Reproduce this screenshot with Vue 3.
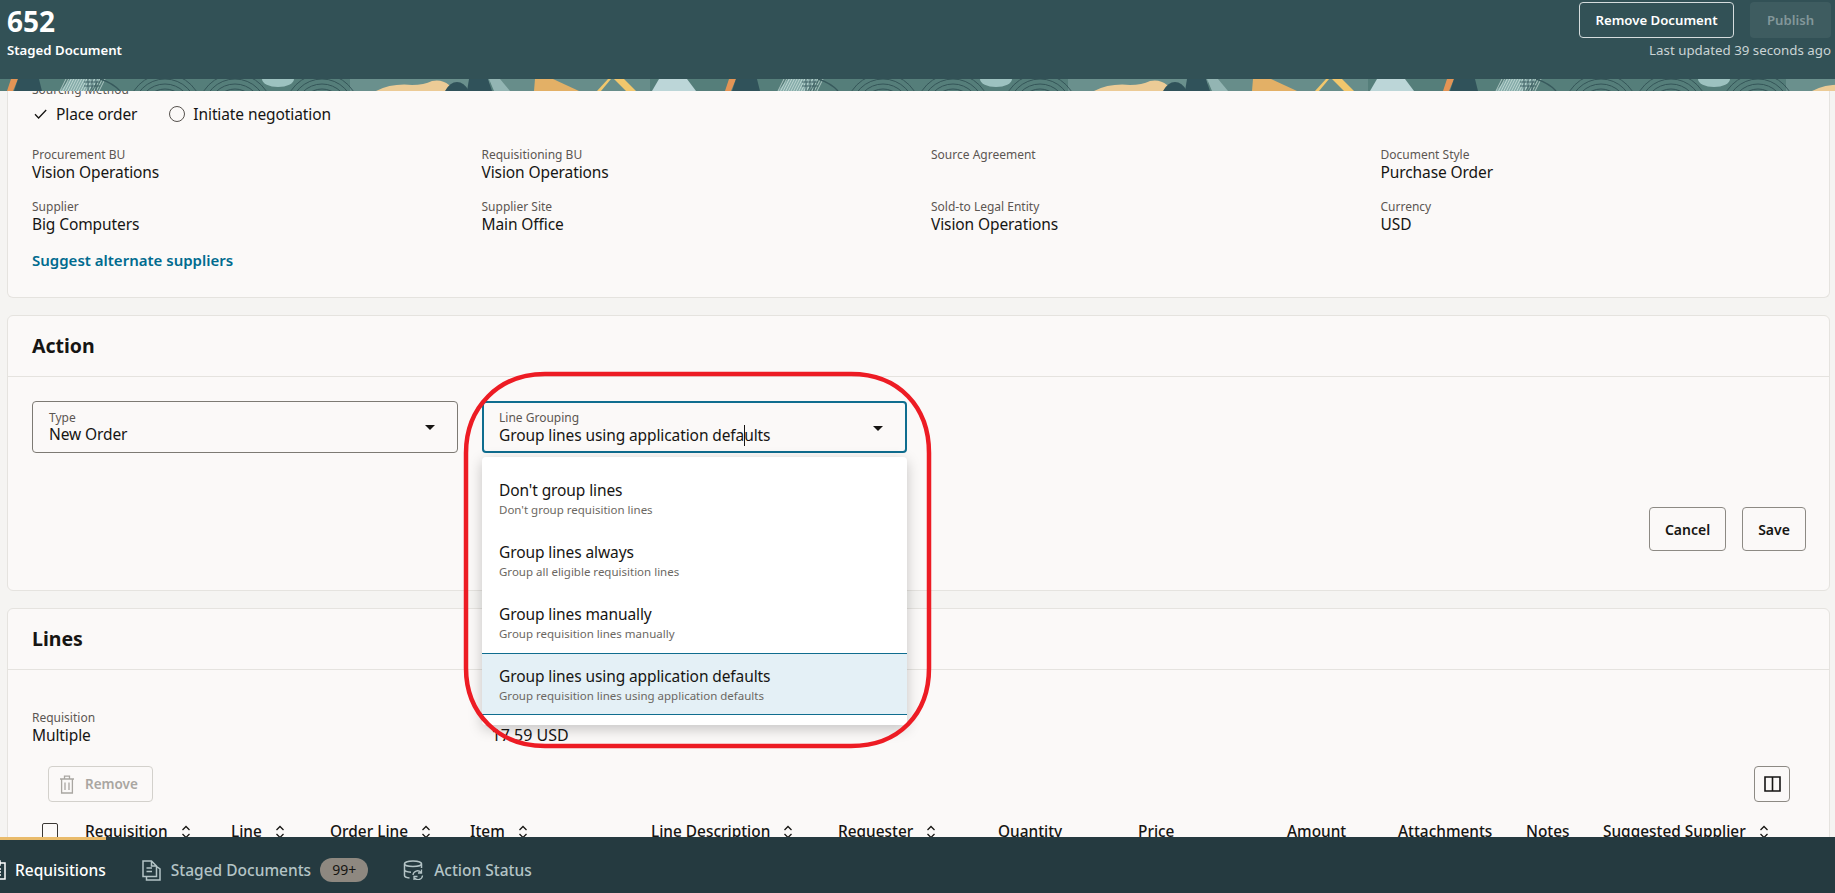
<script setup>
const summary = [
  { label: 'Procurement BU', value: 'Vision Operations' },
  { label: 'Requisitioning BU', value: 'Vision Operations' },
  { label: 'Source Agreement', value: '' },
  { label: 'Document Style', value: 'Purchase Order' },
  { label: 'Supplier', value: 'Big Computers' },
  { label: 'Supplier Site', value: 'Main Office' },
  { label: 'Sold-to Legal Entity', value: 'Vision Operations' },
  { label: 'Currency', value: 'USD' },
]
const options = [
  { title: "Don't group lines", sub: "Don't group requisition lines" },
  { title: 'Group lines always', sub: 'Group all eligible requisition lines' },
  { title: 'Group lines manually', sub: 'Group requisition lines manually' },
  { title: 'Group lines using application defaults', sub: 'Group requisition lines using application defaults', selected: true },
]
const columns = [
  { name: 'Requisition', width: 146, sort: true },
  { name: 'Line', width: 99, sort: true },
  { name: 'Order Line', width: 140, sort: true },
  { name: 'Item', width: 181, sort: true },
  { name: 'Line Description', width: 187, sort: true },
  { name: 'Requester', width: 160, sort: true },
  { name: 'Quantity', width: 140 },
  { name: 'Price', width: 149 },
  { name: 'Amount', width: 111 },
  { name: 'Attachments', width: 128 },
  { name: 'Notes', width: 77 },
  { name: 'Suggested Supplier', width: 200, sort: true },
]
const arcCentres = [165, 235, 322]
const arcRadii = [10, 15, 20, 25, 30, 35]
const hatch = Array.from({ length: 16 }, (_, i) => 62 + i * 2.6)
</script>

<template>
  <div class="page">
    <header class="head">
      <div class="head-left">
        <div class="doc-number">652</div>
        <div class="doc-type">Staged Document</div>
      </div>
      <div class="head-right">
        <div class="head-actions">
          <button class="btn-outline-light">Remove Document</button>
          <button class="btn-disabled-dark">Publish</button>
        </div>
        <div class="updated">Last updated 39 seconds ago</div>
      </div>
    </header>

    <svg class="strip" width="1835" height="12" aria-hidden="true">
      <defs>
        <pattern id="tile" x="0" y="0" width="718" height="12" patternUnits="userSpaceOnUse">
          <rect width="718" height="12" fill="#557e7a" />
          <rect x="350" width="140" height="12" fill="#6a908d" />
          <rect x="500" width="150" height="12" fill="#678d8a" />
          <polygon points="11,0 18,0 13,12 7,12" fill="#e39455" />
          <path d="M18 0H39L42 12H14Z" fill="#30525a" />
          <polygon points="70,0 100,0 88,12 60,12" fill="#84aba8" />
          <g stroke="#d6e6e3" stroke-width="0.9" opacity="0.75">
            <line v-for="h in hatch" :key="h" :x1="h + 4" y1="0" :x2="h - 2" y2="12" />
          </g>
          <g stroke="#37595c" stroke-width="0.9" fill="none">
            <line x1="88" y1="0" x2="88" y2="12" />
            <line x1="92" y1="0" x2="92" y2="12" />
            <line x1="96" y1="0" x2="96" y2="12" />
            <line x1="84" y1="3" x2="100" y2="3" />
            <line x1="84" y1="7" x2="100" y2="7" />
            <path d="M100 0Q113 4 120 12" stroke-width="1.4" />
          </g>
          <g v-for="c in arcCentres" :key="c" fill="none" stroke="#2f4f52" stroke-width="0.9">
            <circle v-for="r in arcRadii" :key="r" :cx="c" cy="32" :r="r + 2" />
          </g>
          <ellipse cx="278" cy="0" rx="16" ry="8" fill="#9dc2c0" />
          <path d="M376 12Q392 4 412 6Q424 6 432 2Q442 0 449 6L456 12Z" fill="#eccb96" />
          <path d="M445 12Q450 3 457 3Q464 3 469 12Z" fill="#30525a" />
          <path d="M469 0H488L492 12H467Z" fill="#30525a" />
          <polygon points="489,0 500,0 510,12 494,12" fill="#93b5b3" />
          <polygon points="535,0 553,0 579,12 534,12" fill="#e3b066" />
          <polygon points="608,0 611,0 601,12 597,12" fill="#f2c76c" />
          <polygon points="614,0 624,0 636,12 626,12" fill="#f2c76c" />
          <polygon points="659,0 687,0 696,12 652,12" fill="#bcd6d8" />
        </pattern>
      </defs>
      <rect width="1835" height="12" fill="url(#tile)" />
    </svg>

    <main class="content">
      <section class="card card-summary">
        <div class="field-label sourcing">Sourcing Method</div>
        <div class="method-row">
          <div class="method">
            <svg class="check" width="13" height="10" viewBox="0 0 13 10"><path d="M1 5.2L4.6 9L12.2 1" fill="none" stroke="#161513" stroke-width="1.3" /></svg>
            <span>Place order</span>
          </div>
          <div class="method">
            <span class="radio"></span>
            <span>Initiate negotiation</span>
          </div>
        </div>
        <div class="summary-grid">
          <div v-for="item in summary" :key="item.label" class="field">
            <div class="field-label">{{ item.label }}</div>
            <div class="field-value">{{ item.value }}</div>
          </div>
        </div>
        <a class="link">Suggest alternate suppliers</a>
      </section>

      <section class="card card-action">
        <h2 class="card-title">Action</h2>
        <div class="card-body">
          <div class="selects">
            <div class="select">
              <div class="select-label">Type</div>
              <div class="select-value">New Order</div>
              <span class="arrow"></span>
            </div>
            <div class="select select-focus">
              <div class="select-label">Line Grouping</div>
              <div class="select-value">Group lines using application defa<span class="caret"></span>ults</div>
              <span class="arrow"></span>
              <div class="dropdown">
                <div v-for="o in options" :key="o.title" class="option" :class="{ selected: o.selected }">
                  <div class="option-title">{{ o.title }}</div>
                  <div class="option-sub">{{ o.sub }}</div>
                </div>
              </div>
            </div>
          </div>
          <div class="action-buttons">
            <button class="btn">Cancel</button>
            <button class="btn">Save</button>
          </div>
        </div>
      </section>

      <section class="card card-lines">
        <h2 class="card-title">Lines</h2>
        <div class="lines-body">
          <div class="lines-summary">
            <div class="field">
              <div class="field-label">Requisition</div>
              <div class="field-value">Multiple</div>
            </div>
            <div class="field total">
              <div class="field-label">&nbsp;</div>
              <div class="field-value">17.59 USD</div>
            </div>
          </div>
          <div class="toolbar">
            <button class="btn-remove">
              <svg width="16" height="19" viewBox="0 0 16 19" fill="none" stroke="#a9a6a1" stroke-width="1.3">
                <path d="M1 4H15M5.5 4V1.2H10.5V4M2.6 4V18H13.4V4M6 7.5V15M10 7.5V15" />
              </svg>
              <span>Remove</span>
            </button>
            <button class="btn-columns">
              <svg width="17" height="16" viewBox="0 0 17 16" fill="none" stroke="#161513" stroke-width="1.6">
                <path d="M1 1H16V15H1ZM8.5 1V15" />
              </svg>
            </button>
          </div>
          <div class="table-head">
            <span class="checkbox"></span>
            <div v-for="c in columns" :key="c.name" class="th" :style="{ width: c.width + 'px' }">
              <span>{{ c.name }}</span>
              <svg v-if="c.sort" width="10" height="14" viewBox="0 0 10 14" fill="none" stroke="#161513" stroke-width="1.3">
                <path d="M1.5 5L5 1.5L8.5 5M1.5 9L5 12.5L8.5 9" />
              </svg>
            </div>
          </div>
        </div>
      </section>
    </main>

    <nav class="tabs">
      <div class="tab tab-active">
        <svg width="19" height="20" viewBox="0 0 19 20" fill="none" stroke="#fff" stroke-width="1.5">
          <path d="M1 3H18V19H1ZM6 1H13V5H6ZM5 9H14M5 12H14M5 15H14" />
        </svg>
        <span>Requisitions</span>
      </div>
      <div class="tab">
        <svg width="19" height="21" viewBox="0 0 19 21" fill="none" stroke="#b4c4c6" stroke-width="1.5">
          <path d="M1 1H9.5L14.5 6V16.5H1ZM9.5 1V6H14.5M4.5 8H10M4.5 11.5H10M14.5 6.5L18 9V20H4.5V16.5" />
        </svg>
        <span>Staged Documents</span>
        <span class="badge">99+</span>
      </div>
      <div class="tab">
        <svg width="21" height="20" viewBox="0 0 21 20" fill="none" stroke="#b4c4c6" stroke-width="1.5">
          <ellipse cx="10" cy="3.8" rx="8.5" ry="2.8" />
          <path d="M1.5 3.8V15.5C1.5 16.8 3.5 17.7 6.5 18M18.5 3.8V8M1.5 9.5C1.5 11 4 12 8 12.2" />
          <path d="M10 15A4.5 4.5 0 0 1 18 12.5M18.5 9.5V13H15M19.5 15.5A4.5 4.5 0 0 1 11.5 18M11 20V16.5H14.5" stroke-width="1.3" />
        </svg>
        <span>Action Status</span>
      </div>
    </nav>

    <svg class="annotation" width="470" height="378" viewBox="0 0 470 378" aria-hidden="true">
      <path d="M82 3H388C436 3 466 36 466 82V297C466 343 436 375 388 375H82C36 375 3 343 3 297V82C3 36 36 3 82 3Z" fill="none" stroke="#ed1c24" stroke-width="4.5" />
    </svg>
  </div>
</template>

<style>
html, body { margin: 0; padding: 0; }
</style>

<style scoped>
.page {
  position: relative;
  width: 1835px;
  height: 893px;
  overflow: hidden;
  display: flex;
  flex-direction: column;
  background: #f5f4f2;
  color: #161513;
  font-family: "Noto Sans", "Open Sans", sans-serif;
  font-size: 15.5px;
  letter-spacing: -0.1px;
}
button { font-family: inherit; cursor: pointer; }

.head {
  flex: none;
  height: 79px;
  box-sizing: border-box;
  background: #325156;
  color: #fff;
  display: flex;
  justify-content: space-between;
  padding: 2px 4px 0 7px;
}
.doc-number { font-size: 28px; font-weight: 700; line-height: 36px; margin-top: 1px; letter-spacing: 0; }
.doc-type { font-size: 13.2px; font-weight: 600; line-height: 20px; margin-top: 1px; letter-spacing: 0; }
.head-right { display: flex; flex-direction: column; align-items: flex-end; }
.head-actions { display: flex; gap: 16px; }
.btn-outline-light {
  width: 155px; height: 36px; box-sizing: border-box;
  background: transparent; color: #fff;
  border: 1px solid #d5dcdd; border-radius: 4px;
  font-size: 13.2px; font-weight: 600;
}
.btn-disabled-dark {
  width: 81px; height: 36px;
  background: #3e5c60; color: #83979a;
  border: 0; border-radius: 4px;
  font-size: 13.2px; font-weight: 600;
}
.updated { font-size: 13.3px; line-height: 20px; margin-top: 2px; color: #cad4d5; letter-spacing: 0; }

.strip { flex: none; display: block; }

.content { flex: 1; min-height: 0; overflow: hidden; position: relative; }

.card {
  margin: 0 5px 17px 7px;
  background: #fbf9f8;
  border: 1px solid #e5e3df;
  border-radius: 6px;
  box-sizing: border-box;
}
.card-summary { margin-top: -40px; padding: 31px 0 26px 24px; height: 247px; border-top: 0; }
.field-label { font-size: 12px; line-height: 16px; color: #5b5652; letter-spacing: 0; }
.method-row { display: flex; gap: 32px; margin-top: 4px; height: 24px; align-items: center; }
.method { display: flex; align-items: center; gap: 9px; line-height: 24px; }
.check { margin-left: 2px; }
.radio { width: 16px; height: 16px; box-sizing: border-box; border: 1px solid #56524e; border-radius: 50%; background: transparent; margin-right: -1px; }
.summary-grid { display: grid; grid-template-columns: repeat(4, 449.5px); row-gap: 18px; margin-top: 21px; }
.field-value { line-height: 18px; min-height: 18px; }
.link { display: block; margin-top: 16px; font-size: 15px; line-height: 22px; font-weight: 600; color: #006b8f; letter-spacing: 0; }

.card-title { margin: 0; font-size: 19.5px; font-weight: 700; line-height: 60px; padding-left: 24px; border-bottom: 1px solid #e5e3df; letter-spacing: 0; }
.card-action { height: 276px; }
.card-body { padding: 24px 23px 0 24px; }
.selects { display: flex; gap: 24px; }
.select {
  position: relative;
  width: 426px; height: 52px; box-sizing: border-box;
  border: 1px solid #7d7a74; border-radius: 4px;
  padding: 9px 16px 0;
  background: #fbf9f8;
}
.select-focus { width: 425px; border: 2px solid #0f6d8f; padding: 8px 15px 0; }
.select-label { font-size: 12px; line-height: 14px; color: #5b5652; letter-spacing: 0; }
.select-value { line-height: 18px; white-space: nowrap; }
.caret { display: inline-block; width: 0; height: 21px; border-left: 1px solid #161513; vertical-align: -5px; margin-right: -1px; }
.arrow {
  position: absolute; right: 22px; top: 23px;
  border-left: 5px solid transparent; border-right: 5px solid transparent; border-top: 5px solid #161513;
}
.dropdown {
  position: absolute; left: -2px; top: 54px; width: 425px;
  box-sizing: border-box; padding: 10px 0;
  background: #fff; border-radius: 4px;
  box-shadow: 0 4px 14px rgba(0,0,0,.22);
  z-index: 3;
}
.option { height: 62px; box-sizing: border-box; padding: 12px 17px 0; }
.option-title { line-height: 22px; }
.option-sub { font-size: 11.5px; line-height: 18px; color: #6b6762; letter-spacing: 0; }
.option.selected { background: #e4f0f6; border-top: 1px solid #0f6d8f; border-bottom: 1px solid #0f6d8f; padding-top: 11px; }
.action-buttons { display: flex; justify-content: flex-end; gap: 16px; margin-top: 54px; }
.btn {
  height: 44px; padding: 0; box-sizing: border-box;
  background: transparent; color: #161513;
  border: 1px solid #8d8a84; border-radius: 4px;
  font-size: 14px; font-weight: 600;
  width: 77px;
  letter-spacing: 0;
}
.btn:last-child { width: 64px; }

.card-lines { height: 300px; margin-bottom: 0; }
.lines-body { padding: 40px 0 0 24px; }
.lines-summary { display: grid; grid-template-columns: repeat(4, 449.5px); }
.total .field-value { padding-left: 10px; font-size: 16px; letter-spacing: 0; }
.toolbar { display: flex; justify-content: space-between; padding: 0 39px 0 16px; margin-top: 22px; }
.btn-remove {
  width: 105px; height: 36px; box-sizing: border-box; padding: 0 0 0 10px;
  display: flex; align-items: center; gap: 10px;
  background: transparent; color: #a9a6a1;
  border: 1px solid #d3d1cc; border-radius: 4px;
  font-size: 13.5px; font-weight: 600;
}
.btn-columns {
  width: 36px; height: 36px; box-sizing: border-box; padding: 0;
  display: flex; align-items: center; justify-content: center;
  background: transparent;
  border: 1px solid #8d8a84; border-radius: 4px;
}
.table-head { display: flex; align-items: center; margin-top: 19px; margin-left: 10px; height: 20px; }
.checkbox { flex: none; width: 16px; height: 16px; box-sizing: border-box; border: 1.5px solid #3a3733; border-radius: 2px; margin-right: 27px; }
.th { flex: none; display: flex; align-items: center; gap: 13px; padding-top: 2px; font-size: 15.4px; font-weight: 500; white-space: nowrap; line-height: 20px; letter-spacing: 0; }

.tabs {
  flex: none; height: 56px; box-sizing: border-box;
  background: #253a40; color: #b4c4c6;
  display: flex; align-items: stretch; gap: 35px;
  padding-top: 10px;
  position: relative; z-index: 2;
  font-size: 15.5px; font-weight: 500;
  letter-spacing: 0;
}
.tab { display: flex; align-items: center; gap: 10px; line-height: 20px; }
.tab-active { color: #fff; margin-left: -13px; margin-right: 1px; padding-left: 13px; box-sizing: content-box; position: relative; gap: 9px; margin-top: -10px; padding-top: 10px; }
.tab-active::before { content: ""; position: absolute; left: 0; right: 0; top: 0; height: 3px; background: #e9bb6b; }
.tab-active svg { margin-left: -13px; }
.badge {
  width: 48px; height: 24px; margin-left: -1px;
  background: #8e8880; color: #161513;
  border-radius: 12px; text-align: center;
  line-height: 24px; font-size: 14px; font-weight: 400;
}

.annotation { position: absolute; left: 463px; top: 371px; z-index: 5; pointer-events: none; }
</style>
